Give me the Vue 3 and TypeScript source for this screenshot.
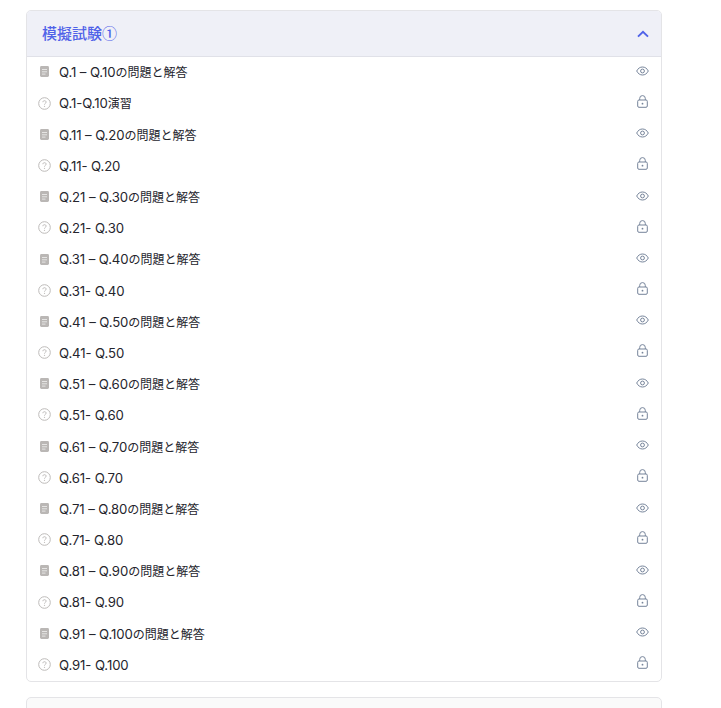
<script setup lang="ts">
interface Row { latin: string; cjk: string; kind: 'doc' | 'quiz' }
const ranges: [number, number][] = [[1,10],[11,20],[21,30],[31,40],[41,50],[51,60],[61,70],[71,80],[81,90],[91,100]]
const rows: Row[] = []
ranges.forEach(([a, b], i) => {
  rows.push({ latin: `Q.${a} – Q.${b}`, cjk: 'の問題と解答', kind: 'doc' })
  rows.push(i === 0
    ? { latin: 'Q.1-Q.10', cjk: '演習', kind: 'quiz' }
    : { latin: `Q.${a}- Q.${b}`, cjk: '', kind: 'quiz' })
})
</script>

<template>
  <div class="page">
    <section class="card">
      <header class="head">
        <span class="title">模擬試験①</span>
        <svg class="chev" width="12" height="8" viewBox="0 0 12 8" fill="none"><path d="M1 6.600 6 1.800l5 4.800" stroke="#4f62e8" stroke-width="1.900"/></svg>
      </header>
      <ul class="list">
        <li v-for="(r, i) in rows" :key="i" class="row">
          <svg v-if="r.kind === 'doc'" class="lead" width="13" height="13" viewBox="0 0 13 13">
            <rect x="2" y="1" width="9" height="11" rx="1.400" fill="#bab7b5"/>
            <path d="M4 4.500h5M4 6.800h5M4 9.100h3.500" stroke="#e6e5e4" stroke-width="1"/>
          </svg>
          <svg v-else class="lead" width="13" height="13" viewBox="0 0 13 13" fill="none">
            <circle cx="6.500" cy="6.500" r="5.800" stroke="#bdbbb9"/>
            <path d="M4.900 5.200C4.900 4.200 5.600 3.700 6.500 3.700s1.600.5 1.600 1.400c0 1.300-1.600 1.300-1.600 2.500" stroke="#bdbbb9"/>
            <circle cx="6.500" cy="9.300" r=".65" fill="#bdbbb9"/>
          </svg>
          <span class="label">{{ r.latin }}<span v-if="r.cjk" class="cjk">{{ r.cjk }}</span></span>
          <span class="trail">
            <svg v-if="r.kind === 'doc'" width="13" height="10" viewBox="0 0 13 10" fill="none">
              <path d="M.7 5C2 2.400 4 1 6.500 1s4.500 1.400 5.800 4c-1.300 2.600-3.300 4-5.800 4S2 7.600.7 5Z" stroke="#76849a"/>
              <circle cx="6.500" cy="5" r="1.900" stroke="#76849a"/>
            </svg>
            <svg v-else class="lock" width="11" height="13" viewBox="0 0 11 13" fill="none">
              <rect x=".7" y="5" width="9.600" height="7.300" rx="1.300" stroke="#76849a"/>
              <path d="M2.700 5V3.400a2.800 2.800 0 0 1 5.600 0V5" stroke="#76849a"/>
              <circle cx="5.500" cy="8.700" r=".9" fill="#76849a"/>
            </svg>
          </span>
        </li>
      </ul>
    </section>
    <section class="card next"></section>
  </div>
</template>

<style>
html, body { margin: 0; background: #fff; overflow: hidden; }
</style>

<style scoped>
.page {
  width: 636px;
  padding: 10px 0 0 26px;
  height: 698px;
  overflow: hidden;
  font-family: Inter, "Noto Sans CJK JP", sans-serif;
}
.card {
  border: 1px solid #e4e4e7;
  border-radius: 5px;
  box-sizing: border-box;
  background: #fff;
}
.head {
  height: 46px;
  background: #eff0f7;
  border-bottom: 1px solid #e0e1e8;
  border-radius: 4px 4px 0 0;
  box-sizing: border-box;
  display: flex;
  align-items: center;
  justify-content: space-between;
  padding: 0 12px 3px 15px;
}
.chev { position: relative; top: 1.500px; }
.title {
  color: #4f62e8;
  font-family: "Noto Sans CJK JP", sans-serif;
  font-size: 15px;
  font-weight: 500;
}
.list {
  list-style: none;
  margin: 0;
  padding: 0.3px 0 0;
  height: 624px;
  box-sizing: border-box;
}
.row {
  height: 31.2px;
  display: flex;
  align-items: center;
  padding: 0 12px 0 11px;
}
.lead { flex: none; margin-right: 8px; position: relative; top: -1px; }
.label {
  flex: 1;
  color: #25252d;
  font-size: 13.200px;
  line-height: 1;
  letter-spacing: -0.1px;
}
.cjk {
  font-family: "Noto Sans CJK JP", sans-serif;
  font-size: 12px;
  letter-spacing: 0;
}
.trail {
  flex: none;
  width: 13px;
  display: flex;
  justify-content: center;
  position: relative;
  top: -2px;
}
.lock { position: relative; top: -0.8px; }
.next {
  margin-top: 15px;
  height: 40px;
  background: #fafafa;
}
</style>
